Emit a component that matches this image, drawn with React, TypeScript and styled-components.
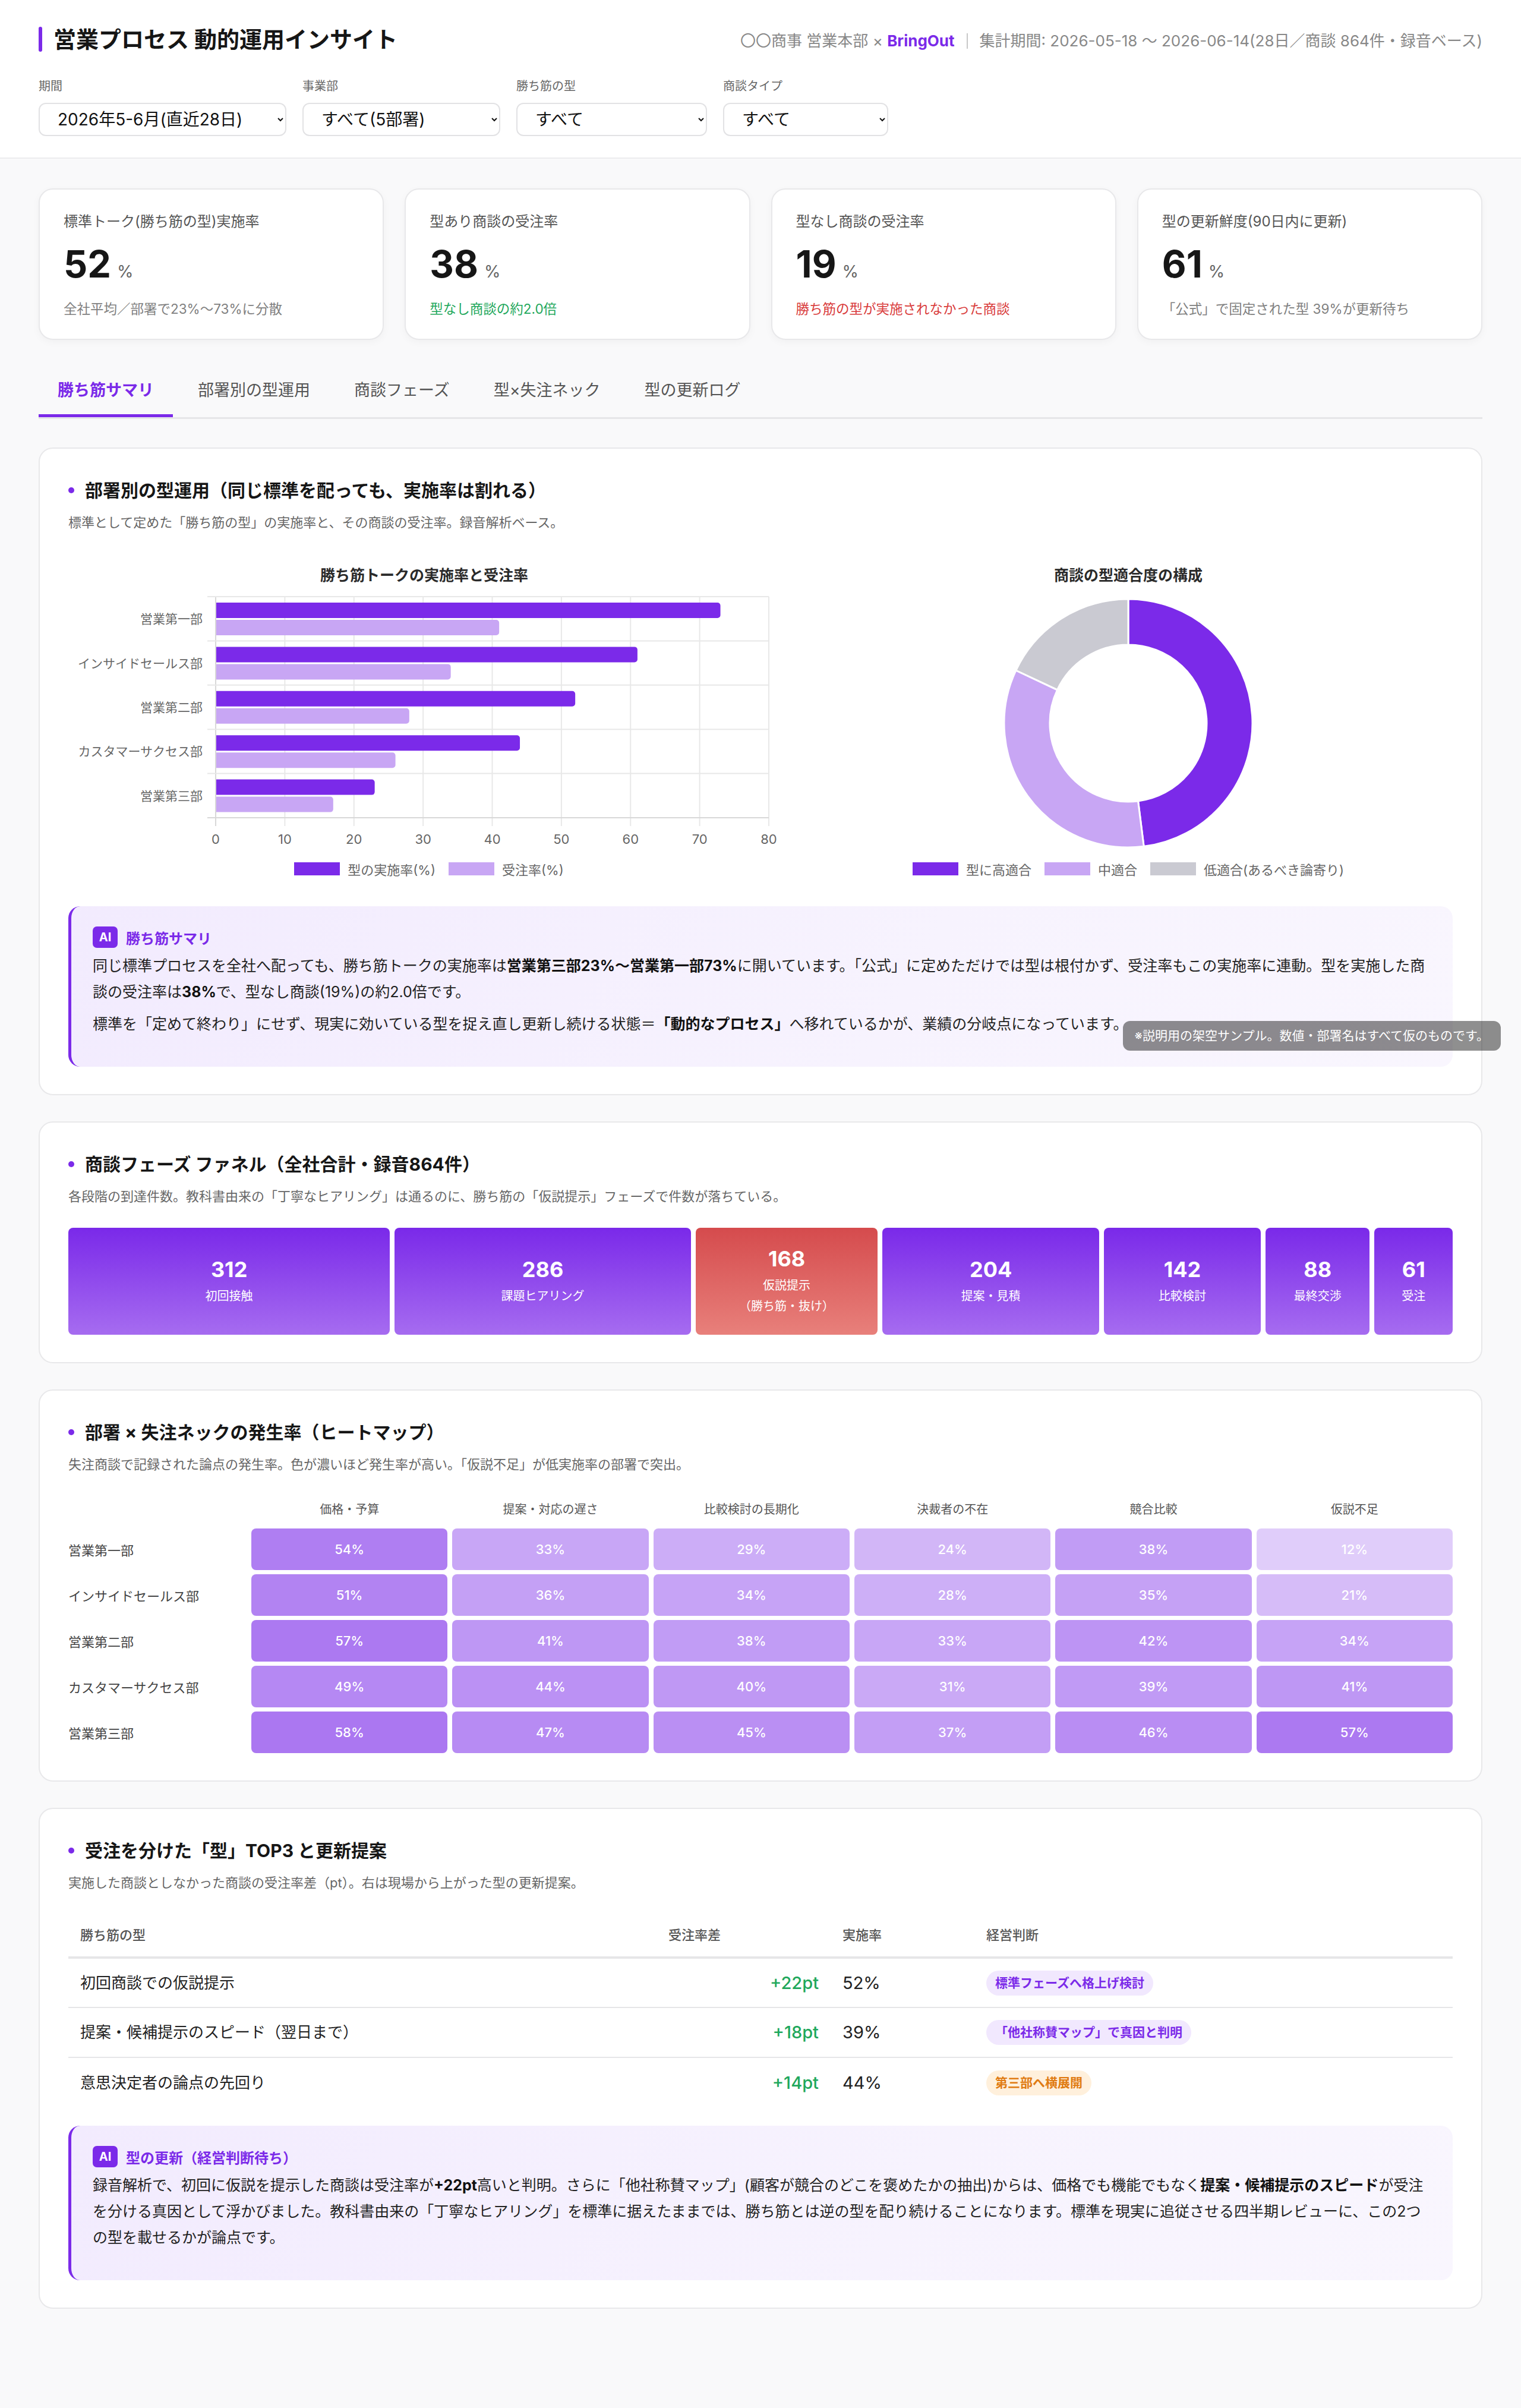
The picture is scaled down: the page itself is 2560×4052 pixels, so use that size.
import React from 'react';
import styled, { createGlobalStyle } from 'styled-components';

const FONT = `Inter, "Noto Sans CJK JP", sans-serif`;
const PURPLE = '#7b2ae9';
const LILAC = '#c8a6f4';
const GREY_SEG = '#cacad2';

const GlobalStyle = createGlobalStyle`
	html, body {
		margin: 0;
		padding: 0;
		background: #f9f9fa;
		font-family: ${FONT};
		color: #1a1a1a;
	}
	* { box-sizing: border-box; }
`;

/* ---------- data ---------- */

const filters = [
	{ label: '期間', value: '2026年5-6月(直近28日)', w: 417 },
	{ label: '事業部', value: 'すべて(5部署)', w: 333 },
	{ label: '勝ち筋の型', value: 'すべて', w: 321 },
	{ label: '商談タイプ', value: 'すべて', w: 278 },
];

type Tone = 'muted' | 'good' | 'bad';

const kpis: { label: string; num: string; sub: string; tone: Tone }[] = [
	{ label: '標準トーク(勝ち筋の型)実施率', num: '52', sub: '全社平均／部署で23%～73%に分散', tone: 'muted' },
	{ label: '型あり商談の受注率', num: '38', sub: '型なし商談の約2.0倍', tone: 'good' },
	{ label: '型なし商談の受注率', num: '19', sub: '勝ち筋の型が実施されなかった商談', tone: 'bad' },
	{ label: '型の更新鮮度(90日内に更新)', num: '61', sub: '「公式」で固定された型 39%が更新待ち', tone: 'muted' },
];

const tabs = ['勝ち筋サマリ', '部署別の型運用', '商談フェーズ', '型×失注ネック', '型の更新ログ'];

const depts = ['営業第一部', 'インサイドセールス部', '営業第二部', 'カスタマーサクセス部', '営業第三部'];
const rates: [number, number][] = [
	[73, 41],
	[61, 34],
	[52, 28],
	[44, 26],
	[23, 17],
];

const fit = [
	{ label: '型に高適合', value: 48, color: PURPLE },
	{ label: '中適合', value: 34, color: LILAC },
	{ label: '低適合(あるべき論寄り)', value: 18, color: GREY_SEG },
];

const funnel = [
	{ num: 312, label: ['初回接触'] },
	{ num: 286, label: ['課題ヒアリング'] },
	{ num: 168, label: ['仮説提示', '（勝ち筋・抜け）'], alert: true },
	{ num: 204, label: ['提案・見積'] },
	{ num: 142, label: ['比較検討'] },
	{ num: 88, label: ['最終交渉'] },
	{ num: 61, label: ['受注'] },
];

const necks = ['価格・予算', '提案・対応の遅さ', '比較検討の長期化', '決裁者の不在', '競合比較', '仮説不足'];
const heat: number[][] = [
	[54, 33, 29, 24, 38, 12],
	[51, 36, 34, 28, 35, 21],
	[57, 41, 38, 33, 42, 34],
	[49, 44, 40, 31, 39, 41],
	[58, 47, 45, 37, 46, 57],
];

type PillTone = 'purple' | 'orange';
const top3: { name: string; diff: string; rate: string; pill: string; tone: PillTone }[] = [
	{ name: '初回商談での仮説提示', diff: '+22pt', rate: '52%', pill: '標準フェーズへ格上げ検討', tone: 'purple' },
	{ name: '提案・候補提示のスピード（翌日まで）', diff: '+18pt', rate: '39%', pill: '「他社称賛マップ」で真因と判明', tone: 'purple' },
	{ name: '意思決定者の論点の先回り', diff: '+14pt', rate: '44%', pill: '第三部へ横展開', tone: 'orange' },
];

/* ---------- header ---------- */

const Page = styled.div`
	position: relative;
	padding-bottom: 160px;
`;

const Header = styled.header`
	background: #fff;
	padding: 40px 65px 36px;
	border-bottom: 2px solid #ececee;
`;

const HeaderTop = styled.div`
	display: flex;
	justify-content: space-between;
	align-items: center;
	height: 52px;
`;

const Title = styled.h1`
	display: flex;
	align-items: center;
	gap: 19px;
	margin: 0;
	font-size: 38px;
	line-height: 52px;
	font-weight: 700;
	color: #161616;
`;

const TitleBar = styled.span`
	width: 6px;
	height: 42px;
	border-radius: 3px;
	background: ${PURPLE};
`;

const Meta = styled.div`
	font-size: 26px;
	color: #888;
	white-space: nowrap;
`;

const Brand = styled.span`
	color: ${PURPLE};
	font-weight: 700;
`;

const Sep = styled.span`
	display: inline-block;
	width: 2px;
	height: 26px;
	margin: 0 20px;
	background: #c8c8c8;
	vertical-align: -4px;
`;

const Filters = styled.div`
	display: flex;
	gap: 27px;
	margin-top: 39px;
`;

const Filter = styled.label`
	display: flex;
	flex-direction: column;
	gap: 14px;
`;

const FilterLabel = styled.span`
	font-size: 20px;
	line-height: 28px;
	color: #666;
`;

const Select = styled.select<{ $w: number }>`
	width: ${(p) => p.$w}px;
	height: 56px;
	padding: 0 12px 0 26px;
	font-family: ${FONT};
	font-size: 28px;
	color: #111;
	background: #fff;
	border: 2px solid #e2e2e4;
	border-radius: 12px;
`;

/* ---------- KPI ---------- */

const Main = styled.main`
	padding: 0 65px;
`;

const KpiGrid = styled.div`
	display: grid;
	grid-template-columns: repeat(4, 1fr);
	gap: 35px;
	margin-top: 50px;
`;

const KpiCard = styled.div`
	background: #fff;
	border: 2px solid #e8e8ea;
	border-radius: 24px;
	padding: 38px 40px 34px;
	box-shadow: 0 4px 14px rgba(0, 0, 0, 0.035);
`;

const KpiLabel = styled.div`
	font-size: 24px;
	line-height: 32px;
	color: #555;
`;

const KpiValue = styled.div`
	display: flex;
	align-items: baseline;
	height: 72px;
	margin-top: 19px;
	line-height: 72px;
`;

const KpiNum = styled.span`
	font-size: 63px;
	font-weight: 700;
	color: #161616;
`;

const KpiUnit = styled.span`
	margin-left: 10px;
	font-size: 28px;
	color: #666;
`;

const toneColor: Record<Tone, string> = { muted: '#808080', good: '#1fa85c', bad: '#d93b3b' };

const KpiSub = styled.div<{ $tone: Tone }>`
	margin-top: 24px;
	font-size: 22.5px;
	line-height: 32px;
	color: ${(p) => toneColor[p.$tone]};
`;

/* ---------- tabs ---------- */

const TabBar = styled.nav`
	display: flex;
	gap: 10px;
	margin-top: 53px;
	border-bottom: 3px solid #e6e6e8;
`;

const Tab = styled.div<{ $active?: boolean }>`
	padding: 14px 32px 22px;
	font-size: 27px;
	line-height: 36px;
	color: ${(p) => (p.$active ? PURPLE : '#555')};
	font-weight: ${(p) => (p.$active ? 700 : 400)};
	border-bottom: 5px solid ${(p) => (p.$active ? PURPLE : 'transparent')};
`;

/* ---------- section cards ---------- */

const SectionCard = styled.section`
	background: #fff;
	border: 2px solid #e8e8ea;
	border-radius: 24px;
	padding: 48px 48px 46px;
	margin-top: 44px;
	&:first-of-type {
		margin-top: 48px;
	}
`;

const SectionTitle = styled.h2`
	display: flex;
	align-items: center;
	gap: 18px;
	margin: 0;
	font-size: 30px;
	line-height: 44px;
	font-weight: 700;
	color: #161616;
	&::before {
		content: '';
		width: 10px;
		height: 10px;
		border-radius: 50%;
		background: ${PURPLE};
	}
`;

const SectionDesc = styled.p`
	margin: 16px 0 0;
	font-size: 22px;
	line-height: 32px;
	color: #666;
`;

/* ---------- charts ---------- */

const Charts = styled.div`
	display: grid;
	grid-template-columns: 1198px 1fr;
	gap: 40px;
	margin-top: 57px;
`;

const ChartBox = styled.div`
	display: flex;
	flex-direction: column;
	align-items: center;
`;

const ChartTitle = styled.div`
	font-size: 25px;
	line-height: 32px;
	font-weight: 700;
	color: #2a2a2a;
`;

const ChartSvg = styled.svg`
	display: block;
	font-family: ${FONT};
`;

const Legend = styled.div<{ $shift?: number }>`
	display: flex;
	align-items: center;
	justify-content: center;
	gap: 22px;
	height: 32px;
	margin-top: 12px;
	transform: translateX(${(p) => p.$shift ?? 0}px);
`;

const LegendItem = styled.span`
	display: flex;
	align-items: center;
	gap: 13px;
	font-size: 22px;
	color: #666;
`;

const Swatch = styled.span<{ $color: string }>`
	width: 77px;
	height: 22px;
	background: ${(p) => p.$color};
`;

const PL = 248;
const PR = 1179;
const PT = 20;
const PB = 392;
const UNIT = (PR - PL) / 80;
const CAT = (PB - PT) / 5;

function barPath(x: number, y: number, w: number, h: number, r: number) {
	return `M${x},${y} H${x + w - r} A${r},${r} 0 0 1 ${x + w},${y + r} V${y + h - r} A${r},${r} 0 0 1 ${x + w - r},${y + h} H${x} Z`;
}

function BarChart() {
	const ticks = [0, 10, 20, 30, 40, 50, 60, 70, 80];
	return (
		<ChartBox>
			<ChartTitle>勝ち筋トークの実施率と受注率</ChartTitle>
			<ChartSvg width={1198} height={450} viewBox="0 0 1198 450">
				{ticks.map((t) => (
					<line
						key={`v${t}`}
						x1={PL + t * UNIT}
						x2={PL + t * UNIT}
						y1={PT}
						y2={PB + 14}
						stroke={t === 0 ? '#d8d8d8' : '#e8e8e8'}
						strokeWidth={2}
					/>
				))}
				{[0, 1, 2, 3, 4, 5].map((i) => (
					<line
						key={`h${i}`}
						x1={PL - 14}
						x2={PR}
						y1={PT + i * CAT}
						y2={PT + i * CAT}
						stroke={i === 5 ? '#d8d8d8' : '#e8e8e8'}
						strokeWidth={2}
					/>
				))}
				{rates.map(([a, b], i) => {
					const top = PT + i * CAT;
					return (
						<g key={depts[i]}>
							<path d={barPath(PL + 1, top + 10, a * UNIT - 1, 26, 5)} fill={PURPLE} />
							<path d={barPath(PL + 1, top + 39, b * UNIT - 1, 26, 5)} fill={LILAC} />
							<text x={226} y={top + CAT / 2 + 8} textAnchor="end" fontSize={21} fill="#666">
								{depts[i]}
							</text>
						</g>
					);
				})}
				{ticks.map((t) => (
					<text key={`t${t}`} x={PL + t * UNIT} y={436} textAnchor="middle" fontSize={22} fill="#666">
						{t}
					</text>
				))}
			</ChartSvg>
			<Legend $shift={8}>
				<LegendItem>
					<Swatch $color={PURPLE} />
					型の実施率(%)
				</LegendItem>
				<LegendItem>
					<Swatch $color={LILAC} />
					受注率(%)
				</LegendItem>
			</Legend>
		</ChartBox>
	);
}

function sector(cx: number, cy: number, R: number, r: number, a0: number, a1: number) {
	const pt = (rad: number, a: number) => [cx + rad * Math.sin(a), cy - rad * Math.cos(a)];
	const large = a1 - a0 > Math.PI ? 1 : 0;
	const [x0, y0] = pt(R, a0);
	const [x1, y1] = pt(R, a1);
	const [x2, y2] = pt(r, a1);
	const [x3, y3] = pt(r, a0);
	return `M${x0},${y0} A${R},${R} 0 ${large} 1 ${x1},${y1} L${x2},${y2} A${r},${r} 0 ${large} 0 ${x3},${y3} Z`;
}

function Donut() {
	let acc = 0;
	return (
		<ChartBox>
			<ChartTitle>商談の型適合度の構成</ChartTitle>
			<ChartSvg width={1092} height={450} viewBox="0 0 1092 450">
				{fit.map((s) => {
					const a0 = (acc / 100) * Math.PI * 2;
					acc += s.value;
					const a1 = (acc / 100) * Math.PI * 2;
					return (
						<path
							key={s.label}
							d={sector(546, 233, 209, 132, a0, a1)}
							fill={s.color}
							stroke="#fff"
							strokeWidth={3}
						/>
					);
				})}
			</ChartSvg>
			<Legend>
				{fit.map((s) => (
					<LegendItem key={s.label}>
						<Swatch $color={s.color} />
						{s.label}
					</LegendItem>
				))}
			</Legend>
		</ChartBox>
	);
}

/* ---------- AI box ---------- */

const AiBox = styled.div<{ $gap: number }>`
	margin-top: ${(p) => p.$gap}px;
	padding: 32px 40px 40px 36px;
	border-left: 5px solid ${PURPLE};
	border-radius: 20px;
	background: linear-gradient(120deg, #f2ebfe 0%, #f7f3fe 60%, #f9f6fe 100%);
`;

const AiHead = styled.div`
	display: flex;
	align-items: center;
	gap: 14px;
	height: 40px;
	margin-bottom: 6px;
`;

const AiBadge = styled.span`
	display: flex;
	align-items: center;
	justify-content: center;
	width: 42px;
	height: 36px;
	border-radius: 7px;
	background: ${PURPLE};
	color: #fff;
	font-size: 20px;
	font-weight: 700;
`;

const AiLabel = styled.span`
	font-size: 24px;
	font-weight: 600;
	color: ${PURPLE};
`;

const AiText = styled.p`
	margin: 0 0 10px;
	font-size: 25px;
	line-height: 44px;
	color: #222;
	& strong {
		font-weight: 700;
		color: #111;
	}
`;

/* ---------- funnel ---------- */

const Funnel = styled.div`
	display: flex;
	gap: 8px;
	height: 180px;
	margin-top: 37px;
`;

const FunnelStep = styled.div<{ $grow: number; $alert?: boolean }>`
	flex: ${(p) => p.$grow} 1 0;
	min-width: 0;
	padding: 0 16px;
	display: flex;
	flex-direction: column;
	align-items: center;
	justify-content: center;
	border-radius: 8px;
	color: #fff;
	text-align: center;
	background: ${(p) =>
		p.$alert
			? 'linear-gradient(180deg, #d54b4d 0%, #e8807b 100%)'
			: 'linear-gradient(180deg, #7a29e9 0%, #a66cf0 100%)'};
`;

const FunnelNum = styled.div`
	font-size: 36px;
	line-height: 44px;
	font-weight: 700;
	margin-bottom: 6px;
`;

const FunnelLabel = styled.div`
	font-size: 20px;
	line-height: 35px;
`;

/* ---------- heatmap ---------- */

const Heatmap = styled.div`
	display: grid;
	grid-template-columns: 300px repeat(6, 1fr);
	column-gap: 8px;
	row-gap: 7px;
	margin-top: 46px;
`;

const HeatHead = styled.div`
	padding-bottom: 11px;
	font-size: 20px;
	line-height: 28px;
	color: #555;
	text-align: center;
`;

const HeatRowLabel = styled.div`
	display: flex;
	align-items: center;
	height: 70px;
	font-size: 22px;
	color: #444;
`;

const HeatCell = styled.div<{ $v: number }>`
	display: flex;
	align-items: center;
	justify-content: center;
	height: 70px;
	border-radius: 8px;
	font-size: 22px;
	font-weight: 500;
	color: #fff;
	background: rgba(123, 42, 233, ${(p) => (0.131 + p.$v * 0.00878).toFixed(3)});
`;

/* ---------- table ---------- */

const Table = styled.table`
	width: 100%;
	margin-top: 36px;
	border-collapse: collapse;
	table-layout: fixed;
`;

const Th = styled.th`
	padding: 20px;
	font-size: 22px;
	line-height: 32px;
	font-weight: 500;
	color: #555;
	text-align: left;
	border-bottom: 4px solid #e6e6e8;
`;

const Tr = styled.tr`
	&:not(:last-child) td {
		border-bottom: 2px solid #e6e6e8;
	}
`;

type Cell = 'text' | 'diff' | 'rate';

const Td = styled.td<{ $kind?: Cell }>`
	height: 84px;
	padding: 0 20px;
	font-size: ${(p) => (p.$kind && p.$kind !== 'text' ? 29 : 26)}px;
	line-height: 32px;
	color: ${(p) => (p.$kind === 'diff' ? '#1fa85c' : '#222')};
	font-weight: ${(p) => (p.$kind === 'diff' ? 500 : 400)};
	text-align: ${(p) => (p.$kind === 'diff' ? 'right' : 'left')};
`;

const Pill = styled.span<{ $tone: PillTone }>`
	display: inline-block;
	height: 42px;
	padding: 0 15px;
	border-radius: 21px;
	font-size: 21px;
	line-height: 42px;
	font-weight: 700;
	color: ${(p) => (p.$tone === 'purple' ? PURPLE : '#e07b12')};
	background: ${(p) => (p.$tone === 'purple' ? '#f1e8fe' : '#fff0dc')};
`;

const Note = styled.div`
	position: absolute;
	top: 1718px;
	right: 34px;
	height: 50px;
	padding: 0 20px;
	border-radius: 12px;
	background: rgba(0, 0, 0, 0.44);
	color: #fff;
	font-size: 21px;
	line-height: 50px;
	white-space: nowrap;
`;

export default function App() {
	return (
		<Page>
			<GlobalStyle />
			<Header>
				<HeaderTop>
					<Title>
						<TitleBar />
						営業プロセス 動的運用インサイト
					</Title>
					<Meta>
						〇〇商事 営業本部 × <Brand>BringOut</Brand>
						<Sep />
						集計期間: 2026-05-18 ～ 2026-06-14(28日／商談 864件・録音ベース)
					</Meta>
				</HeaderTop>
				<Filters>
					{filters.map((f) => (
						<Filter key={f.label}>
							<FilterLabel>{f.label}</FilterLabel>
							<Select $w={f.w} defaultValue={f.value}>
								<option>{f.value}</option>
							</Select>
						</Filter>
					))}
				</Filters>
			</Header>

			<Main>
				<KpiGrid>
					{kpis.map((k) => (
						<KpiCard key={k.label}>
							<KpiLabel>{k.label}</KpiLabel>
							<KpiValue>
								<KpiNum>{k.num}</KpiNum>
								<KpiUnit>%</KpiUnit>
							</KpiValue>
							<KpiSub $tone={k.tone}>{k.sub}</KpiSub>
						</KpiCard>
					))}
				</KpiGrid>

				<TabBar>
					{tabs.map((t, i) => (
						<Tab key={t} $active={i === 0}>
							{t}
						</Tab>
					))}
				</TabBar>

				<SectionCard>
					<SectionTitle>部署別の型運用（同じ標準を配っても、実施率は割れる）</SectionTitle>
					<SectionDesc>標準として定めた「勝ち筋の型」の実施率と、その商談の受注率。録音解析ベース。</SectionDesc>
					<Charts>
						<BarChart />
						<Donut />
					</Charts>
					<AiBox $gap={47}>
						<AiHead>
							<AiBadge>AI</AiBadge>
							<AiLabel>勝ち筋サマリ</AiLabel>
						</AiHead>
						<AiText>
							同じ標準プロセスを全社へ配っても、勝ち筋トークの実施率は<strong>営業第三部23%～営業第一部73%</strong>
							に開いています。「公式」に定めただけでは型は根付かず、受注率もこの実施率に連動。型を実施した商談の受注率は
							<strong>38%</strong>で、型なし商談(19%)の約2.0倍です。
						</AiText>
						<AiText>
							標準を「定めて終わり」にせず、現実に効いている型を捉え直し更新し続ける状態＝<strong>「動的なプロセス」</strong>
							へ移れているかが、業績の分岐点になっています。
						</AiText>
					</AiBox>
				</SectionCard>

				<SectionCard>
					<SectionTitle>商談フェーズ ファネル（全社合計・録音864件）</SectionTitle>
					<SectionDesc>
						各段階の到達件数。教科書由来の「丁寧なヒアリング」は通るのに、勝ち筋の「仮説提示」フェーズで件数が落ちている。
					</SectionDesc>
					<Funnel>
						{funnel.map((f) => (
							<FunnelStep key={f.num} $grow={f.num} $alert={f.alert}>
								<FunnelNum>{f.num}</FunnelNum>
								{f.label.map((l) => (
									<FunnelLabel key={l}>{l}</FunnelLabel>
								))}
							</FunnelStep>
						))}
					</Funnel>
				</SectionCard>

				<SectionCard>
					<SectionTitle>部署 × 失注ネックの発生率（ヒートマップ）</SectionTitle>
					<SectionDesc>
						失注商談で記録された論点の発生率。色が濃いほど発生率が高い。「仮説不足」が低実施率の部署で突出。
					</SectionDesc>
					<Heatmap>
						<HeatHead />
						{necks.map((n) => (
							<HeatHead key={n}>{n}</HeatHead>
						))}
						{heat.map((row, i) => (
							<React.Fragment key={depts[i]}>
								<HeatRowLabel>{depts[i]}</HeatRowLabel>
								{row.map((v, j) => (
									<HeatCell key={necks[j]} $v={v}>
										{v}%
									</HeatCell>
								))}
							</React.Fragment>
						))}
					</Heatmap>
				</SectionCard>

				<SectionCard>
					<SectionTitle>受注を分けた「型」TOP3 と更新提案</SectionTitle>
					<SectionDesc>実施した商談としなかった商談の受注率差（pt）。右は現場から上がった型の更新提案。</SectionDesc>
					<Table>
						<colgroup>
							<col style={{ width: 990 }} />
							<col style={{ width: 293 }} />
							<col style={{ width: 242 }} />
							<col />
						</colgroup>
						<thead>
							<tr>
								<Th>勝ち筋の型</Th>
								<Th>受注率差</Th>
								<Th>実施率</Th>
								<Th>経営判断</Th>
							</tr>
						</thead>
						<tbody>
							{top3.map((r) => (
								<Tr key={r.name}>
									<Td>{r.name}</Td>
									<Td $kind="diff">{r.diff}</Td>
									<Td $kind="rate">{r.rate}</Td>
									<Td>
										<Pill $tone={r.tone}>{r.pill}</Pill>
									</Td>
								</Tr>
							))}
						</tbody>
					</Table>
					<AiBox $gap={31}>
						<AiHead>
							<AiBadge>AI</AiBadge>
							<AiLabel>型の更新（経営判断待ち）</AiLabel>
						</AiHead>
						<AiText>
							録音解析で、初回に仮説を提示した商談は受注率が<strong>+22pt</strong>高いと判明。さらに「他社称賛マップ」(顧客が競合のどこを褒めたかの抽出)からは、価格でも機能でもなく
							<strong>提案・候補提示のスピード</strong>
							が受注を分ける真因として浮かびました。教科書由来の「丁寧なヒアリング」を標準に据えたままでは、勝ち筋とは逆の型を配り続けることになります。標準を現実に追従させる四半期レビューに、この2つの型を載せるかが論点です。
						</AiText>
					</AiBox>
				</SectionCard>
			</Main>

			<Note>※説明用の架空サンプル。数値・部署名はすべて仮のものです。</Note>
		</Page>
	);
}
